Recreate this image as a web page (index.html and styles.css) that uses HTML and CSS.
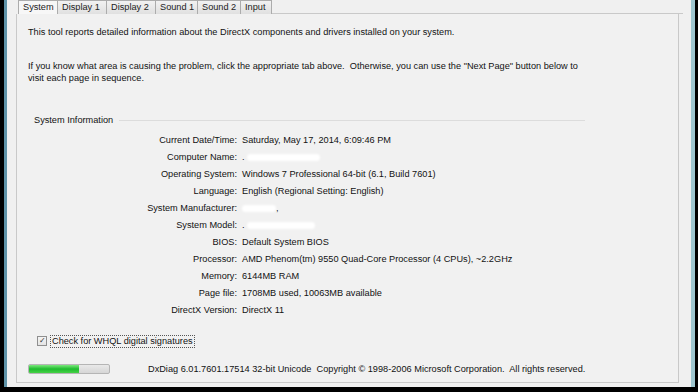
FILE: index.html
```html
<!DOCTYPE html>
<html lang="en">
<head>
    <meta charset="UTF-8">
    <title>DirectX Diagnostic Tool</title>
    <link rel="stylesheet" href="styles.css">
</head>
<body>
    <div class="window">
        <!-- Tabs -->
        <div class="tabs">
            <span class="tab active">System</span>
            <span class="tab">Display 1</span>
            <span class="tab">Display 2</span>
            <span class="tab">Sound 1</span>
            <span class="tab">Sound 2</span>
            <span class="tab">Input</span>
            <span class="tab-fill"></span>
        </div>

        <!-- Tab page -->
        <div class="panel">
            <p class="intro">This tool reports detailed information about the DirectX components and drivers installed on your system.</p>
            <p class="intro second">If you know what area is causing the problem, click the appropriate tab above.&nbsp; Otherwise, you can use the "Next Page" button below to<br>visit each page in sequence.</p>

            <div class="group">
                <div class="group-title"><span>System Information</span><span class="group-line"></span></div>
                <div class="info">
                    <span class="label">Current Date/Time:</span><span class="value">Saturday, May 17, 2014, 6:09:46 PM</span>
                    <span class="label">Computer Name:</span><span class="value">.<i class="blur wide"></i></span>
                    <span class="label">Operating System:</span><span class="value">Windows 7 Professional 64-bit (6.1, Build 7601)</span>
                    <span class="label">Language:</span><span class="value">English (Regional Setting: English)</span>
                    <span class="label">System Manufacturer:</span><span class="value"><i class="blur short"></i>,</span>
                    <span class="label">System Model:</span><span class="value">.<i class="blur mid"></i></span>
                    <span class="label">BIOS:</span><span class="value">Default System BIOS</span>
                    <span class="label">Processor:</span><span class="value">AMD Phenom(tm) 9550 Quad-Core Processor (4 CPUs), ~2.2GHz</span>
                    <span class="label">Memory:</span><span class="value">6144MB RAM</span>
                    <span class="label">Page file:</span><span class="value">1708MB used, 10063MB available</span>
                    <span class="label">DirectX Version:</span><span class="value">DirectX 11</span>
                </div>
            </div>

            <label class="check">
                <span class="box">&#10003;</span>
                <span class="check-text">Check for WHQL digital signatures</span>
            </label>

            <div class="footer">
                <div class="progress"><div class="progress-fill"></div></div>
                <span>DxDiag 6.01.7601.17514 32-bit Unicode&nbsp; Copyright &copy; 1998-2006 Microsoft Corporation.&nbsp; All rights reserved.</span>
            </div>
        </div>
    </div>
</body>
</html>
```

FILE: styles.css
```css
* {
    margin: 0;
    padding: 0;
    box-sizing: border-box;
}

body {
    background: #000;
    width: 698px;
    height: 392px;
    overflow: hidden;
    font-family: 'Liberation Sans', Arial, sans-serif;
    font-size: 9.2px;
    color: #111;
}

.window {
    margin-left: 4px;
    width: 691px;
    height: 387px;
    background: #f0f0f0;
    border-left: 3px solid #5f93a8;
    border-right: 4px solid #9fc7d0;
    padding-left: 9px;
}

/* Tabs */
.tabs {
    display: flex;
    height: 14px;
    align-items: flex-end;
}

.tab {
    height: 14px;
    line-height: 12px;
    padding: 0 4px;
    white-space: nowrap;
    background: linear-gradient(#f2f2f2, #e0e0e0);
    border: 1px solid #acacac;
    border-bottom: none;
    border-left: none;
    color: #222;
}

.tab.active {
    background: #f7f7f7;
    margin-left: 2px;
    border-left: 1px solid #acacac;
    width: 40px;
}

.tab:nth-child(2) { width: 49px; }
.tab:nth-child(3) { width: 49px; }
.tab:nth-child(4) { width: 42px; }
.tab:nth-child(5) { width: 43px; }
.tab:nth-child(6) { width: 31px; }

.tab-fill {
    flex: 1;
    margin-right: 8px;
    border-bottom: 1px solid #c9c9c9;
}

/* Tab page */
.panel {
    width: 663px;
    height: 369px;
    border: 1px solid #c9c9c9;
    border-top: none;
    background: #f1f1f1;
    padding: 12px 11px 0;
}

.intro {
    line-height: 12px;
}

.intro.second {
    margin-top: 22px;
}

.group {
    margin-top: 30px;
}

.group-title {
    display: flex;
    align-items: center;
    padding-left: 6px;
    line-height: 12px;
    width: 557px;
}

.group-line {
    flex: 1;
    margin-left: 6px;
    border-top: 1px solid #dcdcdc;
}

.info {
    display: grid;
    grid-template-columns: 209px auto;
    column-gap: 5px;
    grid-auto-rows: 17px;
    align-items: center;
    margin-top: 5px;
}

.label {
    text-align: right;
}

.blur {
    display: inline-block;
    height: 7px;
    background: #fff;
    border-radius: 4px;
    filter: blur(1px);
    vertical-align: middle;
}

.blur.wide { width: 73px; margin-left: 2px; }
.blur.short { width: 34px; }
.blur.mid { width: 68px; margin-left: 2px; }

/* Checkbox */
.check {
    display: flex;
    align-items: center;
    gap: 3px;
    margin: 16px 0 0 9px;
    height: 14px;
}

.box {
    width: 10px;
    height: 10px;
    border: 1px solid #8f8f8f;
    background: linear-gradient(#f4f4f4, #e4e4e4);
    font-size: 8px;
    line-height: 8px;
    text-align: center;
    color: #333;
}

.check-text {
    border: 1px dotted #555;
    padding: 0 1px;
    line-height: 11px;
}

/* Footer */
.footer {
    display: flex;
    align-items: center;
    gap: 38px;
    margin-top: 16px;
}

.progress {
    width: 82px;
    height: 10px;
    border: 1px solid #b5b5b5;
    border-radius: 2px;
    background: linear-gradient(#e9e9e9, #d6d6d6);
    overflow: hidden;
}

.progress-fill {
    width: 50px;
    height: 100%;
    background: linear-gradient(#7de87d, #1fbb2f 50%, #46d246);
}
```
